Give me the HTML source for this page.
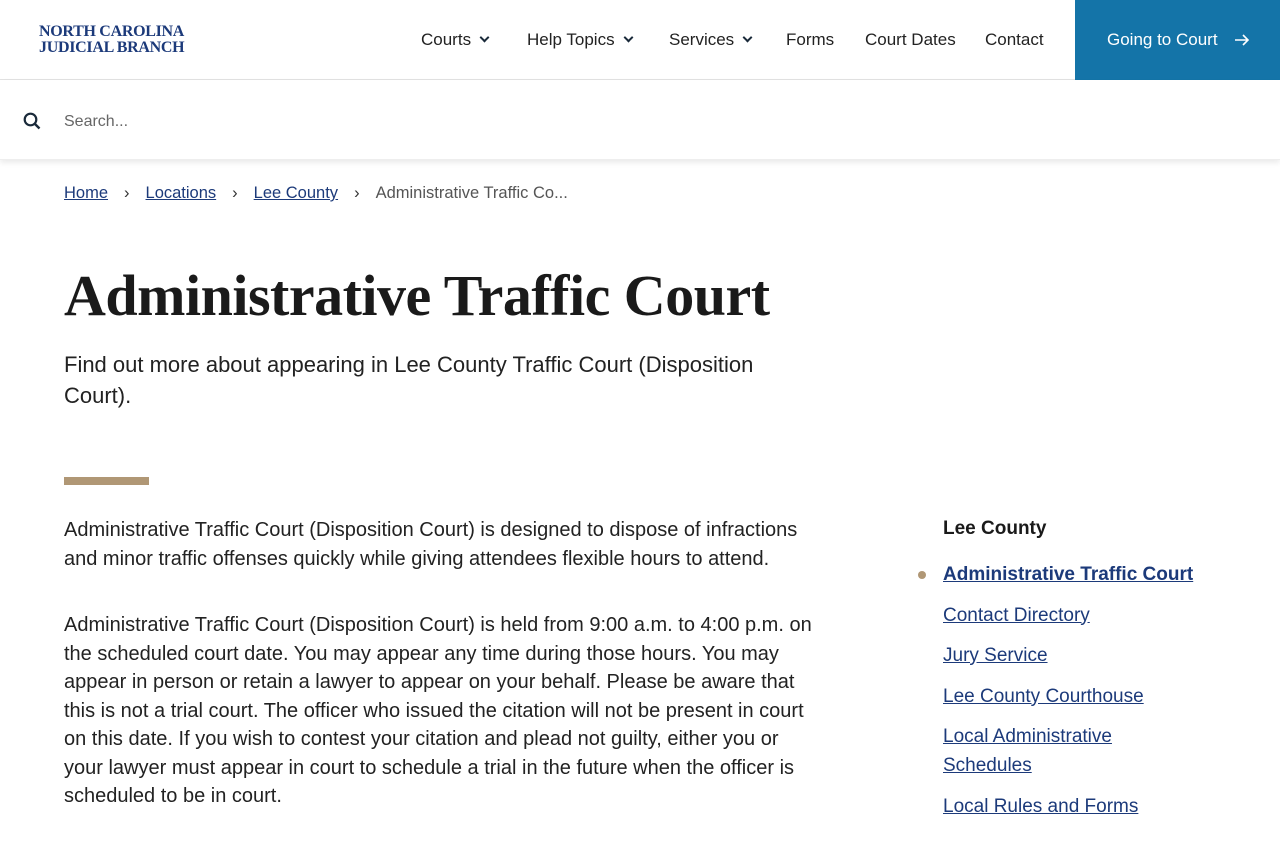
<!DOCTYPE html>
<html><head><meta charset="utf-8"><style>
*{margin:0;padding:0;box-sizing:border-box}
body{width:1280px;height:800px;overflow:hidden;background:#fff;font-family:"Liberation Sans","DejaVu Sans",sans-serif;color:#1f1f1f}
.hdr{height:80px;position:relative;border-bottom:1px solid #e2e2e2}
.logo{position:absolute;left:39px;top:24px;font-family:"Liberation Serif",serif;font-weight:bold;color:#1c3a7a;font-size:16px;line-height:16px;letter-spacing:-0.3px}
.nav{position:absolute;top:0;height:80px;display:flex;align-items:center;font-size:17px;color:#222}
.nav span{position:absolute;white-space:nowrap}
.chev{display:inline-block;width:7px;height:7px;border-right:2px solid #1a2a3a;border-bottom:2px solid #1a2a3a;transform:rotate(45deg);margin-left:10px;position:relative;top:-4px}
.go{position:absolute;left:1075px;top:0;width:205px;height:80px;background:#1474a8;color:#fff;font-size:17px;display:flex;align-items:center;padding-left:32px}
.search{height:80px;position:relative;box-shadow:0 3px 5px rgba(0,0,0,.08);border-bottom:1px solid #eee}
.search .ph{position:absolute;left:64px;top:33px;font-size:16px;color:#666}
.bc{position:absolute;top:184px;left:64px;font-size:16.5px;color:#555;white-space:nowrap}
.bc a{color:#1c3a7a;text-decoration:underline}
.bc .sep{display:inline-block;margin:0 16px;color:#333}
h1{position:absolute;left:64px;top:262px;font-family:"Liberation Serif",serif;font-weight:bold;font-size:58px;color:#1a1a1a;letter-spacing:-0.5px;white-space:nowrap}
.lead{position:absolute;left:64px;top:349px;width:760px;font-size:22px;line-height:31px;color:#222;white-space:nowrap}
.bar{position:absolute;left:64px;top:477px;width:85px;height:8px;background:#b09775}
.body{position:absolute;left:64px;top:516px;width:800px;font-size:20px;line-height:28.5px;color:#222;white-space:nowrap}
.body p{margin-bottom:38px}
.side{position:absolute;left:943px;top:518px;font-size:19px}
.side h3{font-size:19px;font-weight:bold;margin-bottom:20px;color:#1a1a1a}
.side a{display:block;color:#1c3a7a;text-decoration:underline;line-height:29px;margin-bottom:11.5px}
.side a.cur{font-weight:bold;position:relative}
.side a.cur:before{content:"";position:absolute;left:-25px;top:11px;width:8px;height:8px;border-radius:50%;background:#b09775}
</style></head><body>
<div class="hdr">
<div class="logo">NORTH CAROLINA<br>JUDICIAL BRANCH</div>
<div class="nav">
<span style="left:421px">Courts<i class="chev"></i></span>
<span style="left:527px">Help Topics<i class="chev"></i></span>
<span style="left:669px">Services<i class="chev"></i></span>
<span style="left:786px">Forms</span>
<span style="left:865px">Court Dates</span>
<span style="left:985px">Contact</span>
</div>
<div class="go">Going to Court <svg style="margin-left:16px" width="16" height="14" viewBox="0 0 16 14"><path d="M1 7h13M9 2l5 5-5 5" stroke="#fff" stroke-width="1.6" fill="none"/></svg></div>
</div>
<div class="search">
<svg style="position:absolute;left:23px;top:32px" width="18" height="18" viewBox="0 0 18 18"><circle cx="7.5" cy="7.5" r="5.8" stroke="#1a2a3a" stroke-width="2.2" fill="none"/><path d="M12 12l4.5 4.5" stroke="#1a2a3a" stroke-width="2.4"/></svg>
<div class="ph">Search...</div>
</div>
<div class="bc"><a>Home</a><span class="sep">›</span><a>Locations</a><span class="sep">›</span><a>Lee County</a><span class="sep">›</span>Administrative Traffic Co...</div>
<h1>Administrative Traffic Court</h1>
<div class="lead">Find out more about appearing in Lee County Traffic Court (Disposition<br>Court).</div>
<div class="bar"></div>
<div class="body">
<p>Administrative Traffic Court (Disposition Court) is designed to dispose of infractions<br>and minor traffic offenses quickly while giving attendees flexible hours to attend.</p>
<p>Administrative Traffic Court (Disposition Court) is held from 9:00 a.m. to 4:00 p.m. on<br>the scheduled court date. You may appear any time during those hours. You may<br>appear in person or retain a lawyer to appear on your behalf. Please be aware that<br>this is not a trial court. The officer who issued the citation will not be present in court<br>on this date. If you wish to contest your citation and plead not guilty, either you or<br>your lawyer must appear in court to schedule a trial in the future when the officer is<br>scheduled to be in court.</p>
</div>
<div class="side">
<h3>Lee County</h3>
<a class="cur">Administrative Traffic Court</a>
<a>Contact Directory</a>
<a>Jury Service</a>
<a>Lee County Courthouse</a>
<a>Local Administrative<br>Schedules</a>
<a>Local Rules and Forms</a>
</div>
</body></html>
